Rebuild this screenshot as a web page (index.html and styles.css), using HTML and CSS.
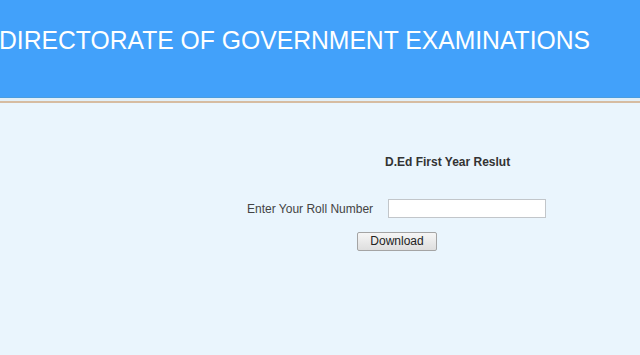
FILE: index.html
```html
<!DOCTYPE html>
<html lang="en">

<head>
    <meta charset="UTF-8">
    <meta name="viewport" content="width=device-width, initial-scale=1.0">
    <title>DGE Result</title>
    <link rel="stylesheet" href="styles.css">
</head>

<body>
    <header id="top-bar">
        <h1 class="title">DIRECTORATE OF GOVERNMENT EXAMINATIONS</h1>
    </header>
    <div class="divider"></div>

    <section id="result-section">
        <h2 class="heading">D.Ed First Year Reslut</h2>
        <form id="roll-form">
            <div class="row">
                <label for="roll">Enter Your Roll Number</label>
                <input type="text" name="roll" id="roll">
            </div>
            <div class="btn-row">
                <input type="submit" id="btn" value="Download">
            </div>
        </form>
    </section>
</body>

</html>
```
FILE: styles.css
```css
body {
    margin: 0;
    background-color: #eaf5fd;
    font-family: "Liberation Sans", Arial, sans-serif;
}

#top-bar {
    height: 98px;
    background-color: #42a1fa;
    border-bottom: 1px solid #4a9de0;
    box-sizing: border-box;
    padding-top: 25px;
}

.title {
    display: inline-block;
    margin: 0 0 0 -1px;
    font-size: 26px;
    line-height: 30px;
    font-weight: normal;
    color: #fff;
    white-space: nowrap;
    transform: scaleX(0.95);
    transform-origin: left center;
}

.divider {
    height: 3px;
    background-color: #e2eff7;
    border-bottom: 2px solid #d6bca2;
}

#result-section {
    padding-top: 52px;
}

.heading {
    margin: 0 0 0 385px;
    font-size: 12px;
    line-height: 14px;
    font-weight: bold;
    color: #333;
}

#roll-form {
    display: flex;
    flex-direction: column;
    margin-top: 30px;
}

.row {
    display: flex;
    align-items: center;
    gap: 15px;
    padding-left: 247px;
}

label {
    font-size: 12px;
    color: #444;
    width: 126px;
    white-space: nowrap;
}

#roll {
    width: 158px;
    height: 19px;
    box-sizing: border-box;
    margin: 0;
    border: 1px solid #c2c6ca;
    background: #fff;
}

.btn-row {
    padding-left: 357px;
    margin-top: 13px;
}

#btn {
    width: 80px;
    height: 19px;
    margin: 0;
    padding: 0;
    font-family: "Liberation Sans", Arial, sans-serif;
    font-size: 12px;
    color: #222;
    border: 1px solid #a4a4a4;
    border-radius: 2px;
    background: linear-gradient(#f6f6f6, #dedede);
}
```
